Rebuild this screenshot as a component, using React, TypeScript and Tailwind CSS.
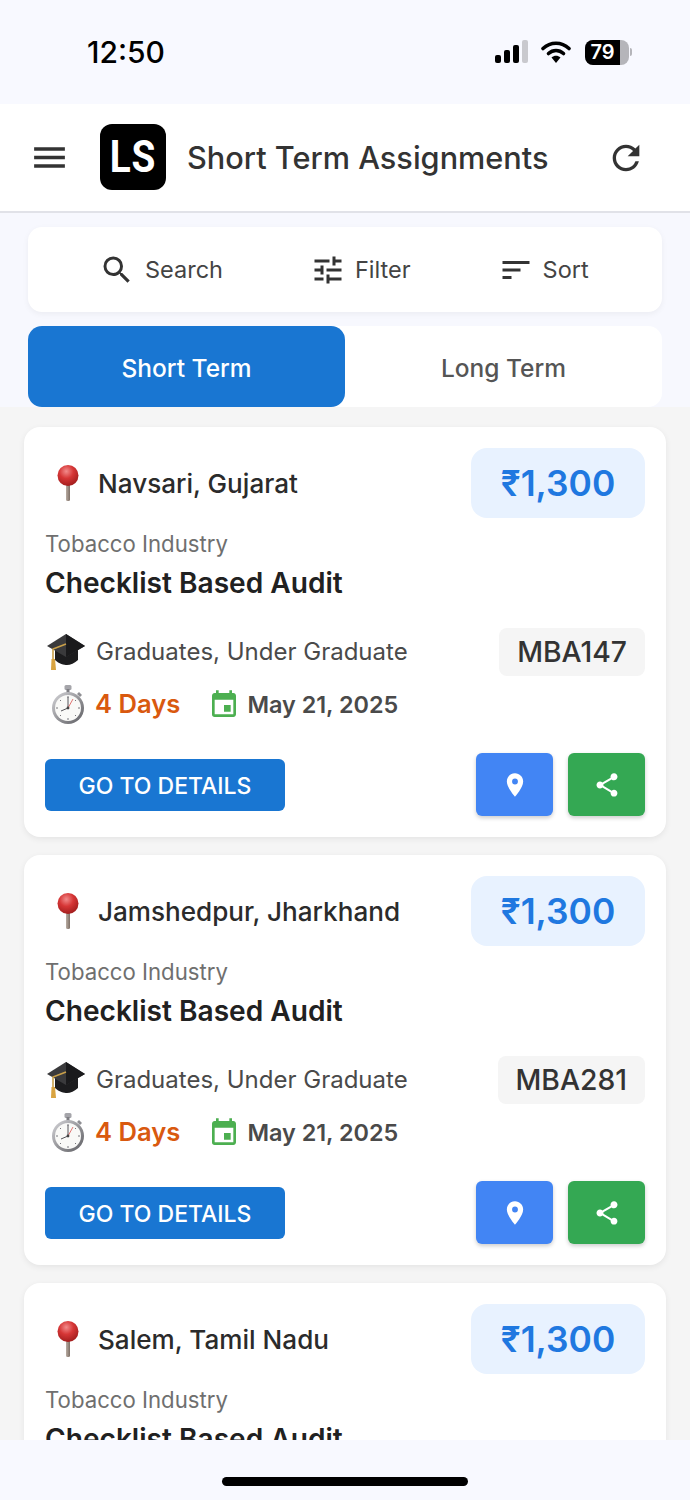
import { MdEvent, MdMenu, MdPlace, MdRefresh, MdSearch, MdShare, MdSort, MdTune } from "react-icons/md";

const jobs: { city: string; code?: string }[] = [
  { city: "Navsari, Gujarat", code: "MBA147" },
  { city: "Jamshedpur, Jharkhand", code: "MBA281" },
  { city: "Salem, Tamil Nadu" },
];

function PinEmoji() {
  return (
    <svg width="26" height="38" viewBox="0 0 26 38" className="shrink-0">
      <defs>
        <radialGradient id="pinHead" cx="0.42" cy="0.3" r="0.75">
          <stop offset="0" stopColor="#f28b8b" />
          <stop offset="0.45" stopColor="#d63636" />
          <stop offset="1" stopColor="#9c1a1a" />
        </radialGradient>
        <linearGradient id="pinStick" x1="0" x2="1" y1="0" y2="0">
          <stop offset="0" stopColor="#b9aca2" />
          <stop offset="1" stopColor="#7d6f66" />
        </linearGradient>
      </defs>
      <rect x="12" y="16" width="4" height="21" rx="1.5" fill="url(#pinStick)" />
      <circle cx="14" cy="11.5" r="10.5" fill="url(#pinHead)" />
    </svg>
  );
}

function CapEmoji() {
  return (
    <svg width="40" height="38" viewBox="0 0 40 38" className="shrink-0">
      <path d="M9 17v10c4 4 9 5 12 5s8-2 11-5V17z" fill="#1c1c1e" />
      <path d="M20 1l19 12-19 11L1 13z" fill="#3a3a3c" />
      <path d="M20 1l19 12-19 11z" fill="#1a1a1c" />
      <path d="M20 11L7 16v10" fill="none" stroke="#c9a04a" strokeWidth="1.6" />
      <path d="M5.5 26h3.5l1 11H5z" fill="#d9a441" />
    </svg>
  );
}

function WatchEmoji() {
  return (
    <svg width="38" height="40" viewBox="0 0 38 40" className="shrink-0">
      <defs>
        <linearGradient id="watchRing" x1="0" x2="1" y1="0" y2="1">
          <stop offset="0" stopColor="#d6d6da" />
          <stop offset="0.6" stopColor="#8a8a8e" />
          <stop offset="1" stopColor="#5f5f64" />
        </linearGradient>
      </defs>
      <rect x="17.5" y="0" width="7" height="5" rx="1.5" fill="#a5a5aa" />
      <rect x="19.5" y="4" width="3" height="5" fill="#7d7d82" />
      <path d="M32 7l3 3-2 2-3-3z" fill="#8f8f94" />
      <circle cx="21" cy="23" r="16" fill="url(#watchRing)" />
      <circle cx="21" cy="23" r="13" fill="#f9f9f7" />
      <path d="M21 23V12M21 23l-7 3" stroke="#55555a" strokeWidth="1" fill="none" />
      <path d="M21 23l5-9" stroke="#d9534f" strokeWidth="0.8" fill="none" />
      <circle cx="21" cy="23" r="1.4" fill="#444" />
      <path d="M21 11v2M21 33v2M9 23h2M31 23h2M13 15l1 1M29 15l-1 1M13 31l1-1M29 31l-1-1" stroke="#77777c" strokeWidth="1" />
    </svg>
  );
}

function JobCard({ city, code }: { city: string; code?: string }) {
  return (
    <div className="mb-[18px] h-[410px] shrink-0 rounded-[16px] bg-white px-[21px] pt-[21px] shadow-[0_2px_6px_rgba(0,0,0,0.07)]">
      <div className="flex h-[70px] items-center justify-between">
        <div className="flex items-center gap-[18px] pl-[9px]">
          <PinEmoji />
          <span className="pt-[1px] text-[26.1px] font-medium text-[#2b2b2b]">{city}</span>
        </div>
        <div className="flex h-[70px] w-[174px] items-center justify-center rounded-[16px] bg-[#e8f2ff] pt-[1px] text-[35.4px] font-semibold text-[#1f78e0]">
          ₹1,300
        </div>
      </div>
      <p className="mt-[13px] text-[22.2px] leading-[26px] text-[#6f6f6f]">Tobacco Industry</p>
      <h2 className="mt-[10px] text-[28.1px] font-semibold leading-[32px] text-[#212121]">Checklist Based Audit</h2>
      {code && (
        <>
          <div className="mt-[29px] flex h-[48px] items-center justify-between">
            <div className="flex items-center gap-[10px] pl-[1px]">
              <CapEmoji />
              <span className="text-[24px] text-[#4a4a4a]">Graduates, Under Graduate</span>
            </div>
            <div className="flex h-[48px] items-center rounded-[8px] bg-[#f5f5f5] px-[18px] text-[28.3px] font-medium text-[#333333]">
              {code}
            </div>
          </div>
          <div className="mt-[6px] flex h-[46px] items-center pl-[2px]">
            <WatchEmoji />
            <span className="ml-[10px] pb-[1px] text-[25.6px] font-semibold text-[#d9590f]">4 Days</span>
            <MdEvent className="ml-[28px] text-[#4caf50]" size={32} />
            <span className="ml-[7px] pb-[1px] text-[23.4px] font-semibold text-[#4a4a4a]">May 21, 2025</span>
          </div>
          <div className="mt-[25px] flex items-center justify-between">
            <button className="h-[52px] w-[240px] rounded-[6px] bg-[#1976d2] pt-[3px] text-[23px] font-medium text-white">
              GO TO DETAILS
            </button>
            <div className="flex gap-[15px]">
              <button className="flex h-[63px] w-[77px] items-center justify-center rounded-[6px] bg-[#4285f4] text-white shadow-[0_2px_4px_rgba(0,0,0,0.2)]">
                <MdPlace size={28} />
              </button>
              <button className="flex h-[63px] w-[77px] items-center justify-center rounded-[6px] bg-[#34a853] text-white shadow-[0_2px_4px_rgba(0,0,0,0.2)]">
                <MdShare size={28} />
              </button>
            </div>
          </div>
        </>
      )}
    </div>
  );
}

export default function App() {
  return (
    <div className="flex h-[1500px] w-[690px] flex-col overflow-hidden bg-[#f5f5f5] font-['Inter',sans-serif]">
      {/* status bar */}
      <div className="flex h-[104px] shrink-0 items-center justify-between bg-[#f8f9ff] pl-[87px] pr-[58px] text-black">
        <span className="text-[30px] font-medium">12:50</span>
        <div className="flex items-center">
          <svg width="34" height="24" viewBox="0 0 34 24">
            <rect x="0" y="15" width="6" height="8" rx="2" fill="#000" />
            <rect x="9" y="10" width="6" height="13" rx="2" fill="#000" />
            <rect x="18" y="5" width="6" height="18" rx="2" fill="#000" />
            <rect x="27" y="0" width="6" height="23" rx="2" fill="#c9c9ce" />
          </svg>
          <svg width="30" height="24" viewBox="0 0 30 24" className="ml-[12px]">
            <path d="M2 8.5c7.5-7 18.5-7 26 0" fill="none" stroke="#000" strokeWidth="3.6" strokeLinecap="round" />
            <path d="M7.5 13.5c4.5-4 10.5-4 15 0" fill="none" stroke="#000" strokeWidth="3.6" strokeLinecap="round" />
            <path d="M10.5 17.5c2.8-2.4 6.2-2.4 9 0L15 23z" fill="#000" />
          </svg>
          <div className="ml-[14px] flex items-center">
            <div className="relative flex h-[25px] w-[44px] items-center overflow-hidden rounded-[8px] bg-[#b5b5ba]">
              <div className="flex h-full w-[35px] items-center justify-center bg-black text-[20px] font-semibold text-white">79</div>
            </div>
            <div className="ml-[1px] h-[8px] w-[2px] rounded-r-full bg-[#b5b5ba]" />
          </div>
        </div>
      </div>

      {/* header */}
      <div className="flex h-[109px] shrink-0 items-center border-b-2 border-[#e1e2e8] bg-white pl-[29px] pr-[44px]">
        <MdMenu size={41} className="text-[#333333]" />
        <div className="-mt-[2px] ml-[30px] flex h-[66px] w-[66px] items-center justify-center rounded-[12px] bg-black">
          <span className="scale-x-[0.86] font-['Roboto',sans-serif] text-[45px] font-bold tracking-[1px] text-white">LS</span>
        </div>
        <h1 className="ml-[21px] flex-1 pt-[2px] text-[30.7px] font-medium text-[#333333]">Short Term Assignments</h1>
        <MdRefresh size={40} className="text-[#333333]" />
      </div>

      {/* search / filter / sort and tabs */}
      <div className="shrink-0 bg-[#f7f8fe] px-[28px] pt-[14px]">
        <div className="flex h-[85px] items-center rounded-[14px] bg-white pl-[71px] text-[23.5px] text-[#444444] shadow-[0_2px_6px_rgba(0,0,0,0.05)]">
          <MdSearch size={36} className="text-[#333333]" />
          <span className="ml-[10px]">Search</span>
          <MdTune size={36} className="ml-[87px] text-[#333333]" />
          <span className="ml-[9px]">Filter</span>
          <MdSort size={36} className="ml-[87px] text-[#333333]" />
          <span className="ml-[9px]">Sort</span>
        </div>
        <div className="mt-[14px] flex h-[81px] rounded-[14px] bg-white text-[24.5px] font-medium">
          <div className="flex w-[317px] items-center justify-center rounded-[14px] bg-[#1976d2] pt-[3px] text-white">Short Term</div>
          <div className="flex flex-1 items-center justify-center pt-[3px] text-[#555555]">Long Term</div>
        </div>
      </div>

      {/* cards */}
      <div className="flex min-h-0 flex-1 flex-col overflow-hidden px-[24px] pt-[20px]">
        {jobs.map((job) => (
          <JobCard key={job.city} city={job.city} code={job.code} />
        ))}
      </div>

      {/* home indicator */}
      <div className="flex h-[60px] shrink-0 items-center justify-center bg-[#f8f9ff] pt-[22px]">
        <div className="h-[9px] w-[246px] rounded-full bg-black" />
      </div>
    </div>
  );
}
